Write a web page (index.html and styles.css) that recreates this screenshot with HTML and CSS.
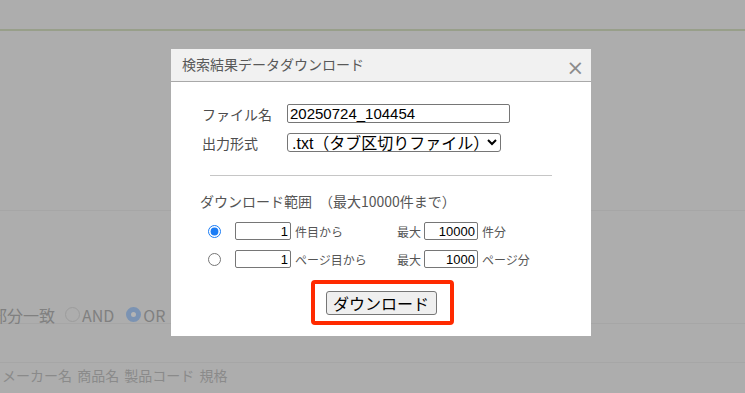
FILE: index.html
```html
<!DOCTYPE html>
<html lang="ja">
<head>
    <meta charset="UTF-8">
    <meta name="viewport" content="width=device-width, initial-scale=1.0">
    <title>検索結果データダウンロード</title>
    <link rel="stylesheet" href="styles.css">
</head>
<body>
    <div class="page">
        <div class="topbar"></div>
        <div class="section"></div>
        <div class="match-row">
            <span class="match-label">部分一致</span>
            <span class="bg-radio"></span><span>AND</span>
            <span class="bg-radio on"></span><span>OR</span>
        </div>
        <div class="blank-row"></div>
        <div class="cols-row">メーカー名 商品名 製品コード 規格</div>
    </div>

    <div class="dialog">
        <div class="dialog-head">
            <span class="dialog-title">検索結果データダウンロード</span>
            <span class="dialog-close">×</span>
        </div>
        <div class="dialog-body">
            <div class="form-grid">
                <label for="fname">ファイル名</label>
                <input id="fname" class="fname" type="text" value="20250724_104454">
                <label for="format">出力形式</label>
                <select id="format" class="format">
                    <option>.txt（タブ区切りファイル）</option>
                    <option>.csv（カンマ区切りファイル）</option>
                </select>
            </div>
            <hr class="sep">
            <div class="range-title">ダウンロード範囲　（最大10000件まで）</div>
            <div class="range-row">
                <input type="radio" name="range" checked>
                <input class="num" type="text" value="1">
                <span class="from">件目から</span>
                <span class="max">最大</span>
                <input class="num wide" type="text" value="10000">
                <span class="unit">件分</span>
            </div>
            <div class="range-row">
                <input type="radio" name="range">
                <input class="num" type="text" value="1">
                <span class="from">ページ目から</span>
                <span class="max">最大</span>
                <input class="num wide" type="text" value="1000">
                <span class="unit">ページ分</span>
            </div>
            <div class="actions">
                <div class="highlight">
                    <button class="dl-btn">ダウンロード</button>
                </div>
            </div>
        </div>
    </div>
</body>
</html>
```

FILE: styles.css
```css
body {
    margin: 0;
    background-color: #adadad;
    font-family: "Noto Sans CJK JP", "Liberation Sans", sans-serif;
    overflow: hidden;
}
.page {
    height: 393px;
    color: #858585;
}
.topbar {
    height: 29px;
    border-bottom: 2px solid #989f8a;
}
.section {
    height: 179px;
    border-bottom: 1px solid #a6a6a6;
}
.match-row {
    height: 113px;
    border-bottom: 1px solid #a6a6a6;
    display: flex;
    align-items: flex-end;
    font-size: 16px;
    line-height: 18px;
    box-sizing: border-box;
    color: #808080;
}
.match-row span {
    position: relative;
    top: 1px;
}
.match-label {
    margin-left: -9px;
    margin-right: 10px;
}
.bg-radio {
    display: inline-block;
    width: 13px;
    height: 13px;
    border: 1px solid #9c9c9c;
    border-radius: 50%;
    margin: 0 2px 2px 0;
}
.bg-radio.on {
    margin-left: 12px;
    width: 5px;
    height: 5px;
    border: 5px solid #7b93b3;
    background-color: #b4b4b4;
}
.blank-row {
    height: 38px;
    border-bottom: 1px solid #a6a6a6;
}
.cols-row {
    padding: 3px 0 0 2px;
    font-size: 14px;
    line-height: 18px;
    color: #8a8a8a;
    word-spacing: 2px;
}

/* dialog */
.dialog {
    position: absolute;
    left: 171px;
    top: 49px;
    width: 420px;
    height: 287px;
    background-color: #fff;
}
.dialog-head {
    height: 33px;
    background-color: #f1f1f1;
    border-bottom: 1px solid #a9a9a9;
    box-sizing: border-box;
    display: flex;
    justify-content: space-between;
    align-items: center;
    padding: 0 7px 0 11px;
}
.dialog-title {
    font-size: 14px;
    color: #595959;
    margin-top: -2px;
}
.dialog-close {
    font-family: "DejaVu Sans", sans-serif;
    font-size: 21px;
    color: #8c8c8c;
    margin-top: 6px;
}
.dialog-body {
    padding: 22px 0 0 31px;
    color: #4d4d4d;
}
.form-grid {
    display: grid;
    grid-template-columns: 85px auto;
    row-gap: 10px;
    align-items: center;
    font-size: 14px;
}
.form-grid label {
    line-height: 18px;
}
.fname {
    width: 223px;
    height: 19px;
    box-sizing: border-box;
    border: 1px solid #767676;
    border-radius: 2px;
    padding: 0 2px;
    font-family: "Liberation Sans", "Noto Sans CJK JP", sans-serif;
    font-size: 15px;
    line-height: 17px;
    color: #000;
}
.format {
    width: 214px;
    height: 19px;
    box-sizing: border-box;
    border: 1px solid #767676;
    border-radius: 3px;
    padding: 0;
    font-family: "Liberation Sans", "Noto Sans CJK JP", sans-serif;
    font-size: 16px;
    color: #000;
    background-color: #fff;
}
.sep {
    margin: 23px 0 0 8px;
    width: 342px;
    border: 0;
    border-top: 1px solid #c6c6c6;
}
.range-title {
    margin: 15px 0 0 -2px;
    font-size: 14px;
    line-height: 20px;
    color: #555;
}
.range-row {
    display: flex;
    align-items: center;
    font-size: 12px;
    color: #555;
    margin-top: 10px;
}
.range-title + .range-row {
    margin-top: 11px;
}
.range-row input[type=radio] {
    margin: 0 14px 0 6px;
    width: 13px;
    height: 13px;
    accent-color: #1a7cf5;
}
.num {
    width: 56px;
    height: 18px;
    box-sizing: border-box;
    border: 1px solid #767676;
    border-radius: 2px;
    padding: 0 2px;
    text-align: right;
    font-family: "Liberation Sans", sans-serif;
    font-size: 13px;
    color: #000;
}
.num.wide {
    width: 54px;
}
.from {
    width: 102px;
    margin-left: 4px;
}
.max {
    margin-right: 3px;
}
.unit {
    margin-left: 4px;
}
.actions {
    display: flex;
    justify-content: center;
    margin: 12px 0 0 -31px;
}
.highlight {
    border: 4px solid #ff2a00;
    border-radius: 4px;
    padding: 7px 13px 6px 11px;
    margin-left: 2px;
}
.dl-btn {
    display: block;
    width: 111px;
    height: 24px;
    border: 1px solid #767676;
    border-radius: 3px;
    background-color: #efefef;
    font-family: "Noto Sans CJK JP", sans-serif;
    font-size: 16px;
    line-height: 20px;
    color: #000;
    padding: 0;
}
```
